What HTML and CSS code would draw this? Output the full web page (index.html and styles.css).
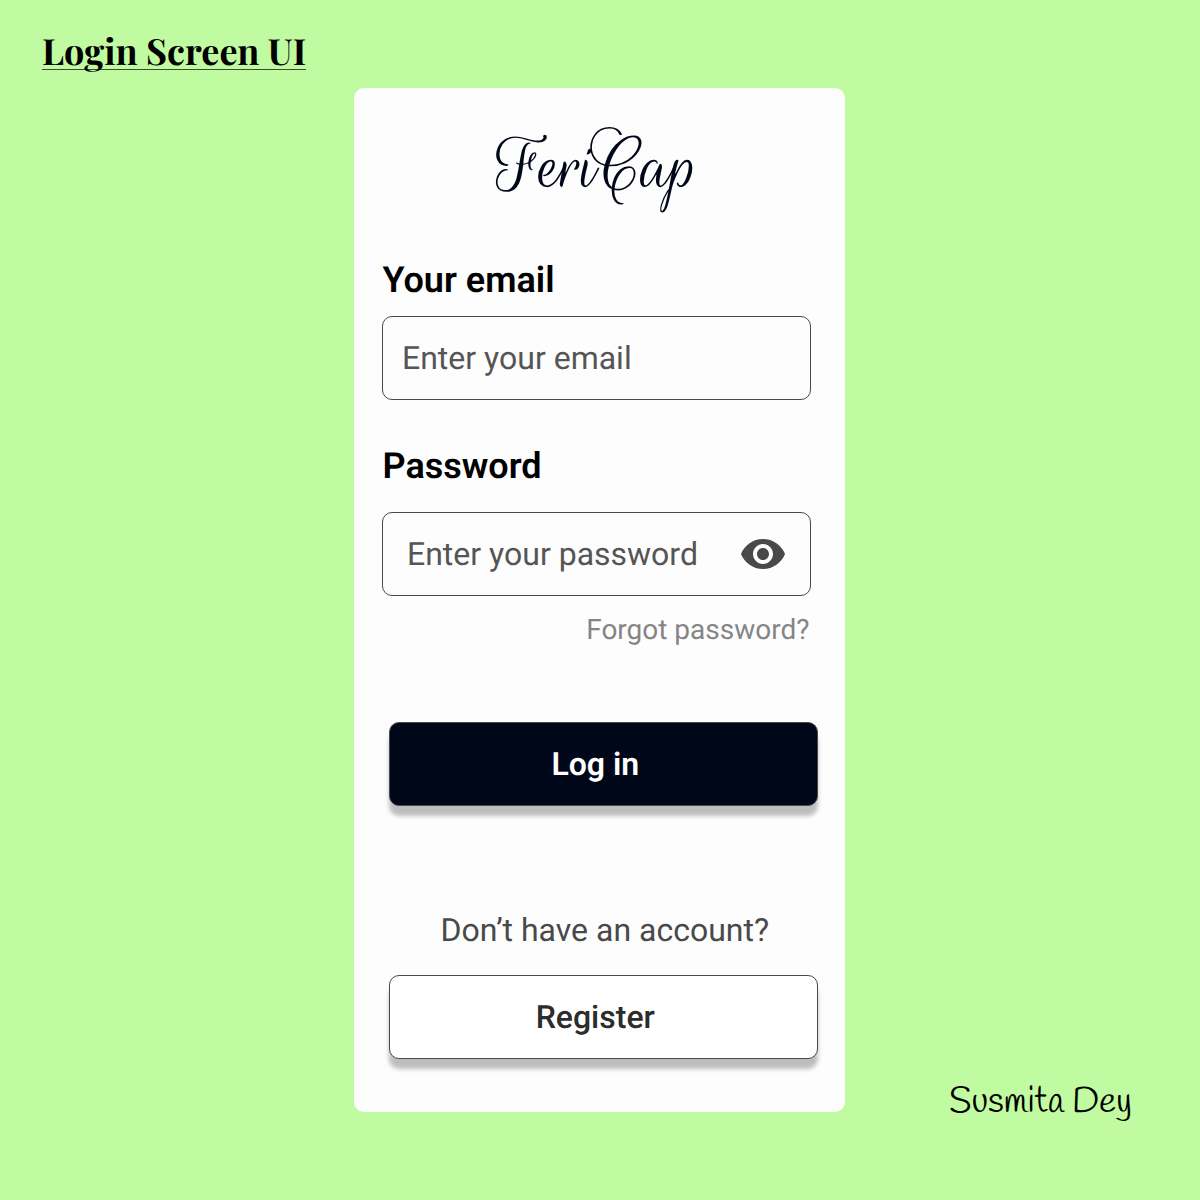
FILE: index.html
```html
<!DOCTYPE html>
<html lang="en">
<head>
<meta charset="utf-8">
<title>Login Screen UI</title>
<link rel="stylesheet" href="styles.css">
</head>
<body>
<div class="board">
  <h1 class="title">Login Screen UI</h1>
  <main class="card">
    <div class="logo">FeriCap</div>
    <form class="form">
      <label class="label" for="email">Your email</label>
      <div class="field"><input class="input" id="email" type="email" placeholder="Enter your email"></div>
      <label class="label label-password" for="password">Password</label>
      <div class="field field-password">
        <input class="input" id="password" type="password" placeholder="Enter your password">
        <svg class="eye" viewBox="1 4.5 22 15" aria-hidden="true"><path fill="#494949" d="M12 4.5C7 4.5 2.73 7.61 1 12c1.73 4.39 6 7.5 11 7.5s9.27-3.11 11-7.5c-1.73-4.39-6-7.5-11-7.5zM12 17c-2.76 0-5-2.24-5-5s2.24-5 5-5 5 2.24 5 5-2.24 5-5 5zm0-8c-1.66 0-3 1.34-3 3s1.34 3 3 3 3-1.34 3-3-1.34-3-3-3z"/></svg>
      </div>
      <a class="forgot">Forgot password?</a>
      <button class="button button-login" type="button">Log in</button>
      <p class="question">Don’t have an account?</p>
      <button class="button button-register" type="button">Register</button>
    </form>
  </main>
  <p class="author">Susmita Dey</p>
</div>
</body>
</html>
```
FILE: styles.css
```css
* { box-sizing: border-box; }
body { margin: 0; background: #c0faa1; font-family: Roboto, sans-serif; text-rendering: geometricPrecision; }
.board {
  width: 1200px;
  height: 1200px;
  display: grid;
  grid-template-columns: 354px 491px 355px;
  grid-template-rows: 88px 1024px 88px;
}
.title {
  grid-area: 1 / 1;
  justify-self: start;
  margin: 29px 0 0 42px;
  height: 41px;
  border-bottom: 1px solid #3a4c31;
  font: 700 36px/44px "Playfair Display", "Liberation Serif", serif;
  white-space: nowrap;
  color: #000;
}
.card {
  grid-area: 2 / 2;
  background: #fdfdfd;
  border-radius: 10px;
  padding: 37px 27px 0 28px;
}
.logo {
  height: 127px;
  padding-left: 113.5px;
  font: 400 80px/84px "Rouge Script", "Liberation Serif", cursive;
  white-space: nowrap;
  color: #000718;
}
.form { display: flex; flex-direction: column; }
.label { height: 64px; font-size: 36px; line-height: 56px; font-weight: 600; color: #000; padding-left: 0.5px; }
.label-password { height: 74px; margin-top: 38px; }
.field {
  display: flex;
  align-items: center;
  width: 429px;
  height: 84px;
  padding: 0 25.5px 0 19px;
  border: 1px solid #494949;
  border-radius: 10px;
}
.field-password { padding-left: 24px; }
.input {
  flex: 1;
  min-width: 0;
  padding: 0;
  border: 0;
  outline: 0;
  background: none;
  font: 400 32px/40px Roboto, sans-serif;
  text-rendering: geometricPrecision;
}
.input::placeholder { color: #555; opacity: 1; }
.eye { width: 44px; height: 30px; flex: none; }
.forgot { width: 427.5px; margin-top: 14px; font-size: 28px; line-height: 40px; text-align: right; color: #858585; }
.button {
  width: 429px;
  height: 84px;
  margin-left: 7px;
  padding: 0 16.5px 0 0;
  border: 1px solid #494949;
  border-radius: 10px;
  box-shadow: 0 10px 4px rgba(0, 0, 0, .25);
  font: 600 32px/40px Roboto, sans-serif;
  text-rendering: geometricPrecision;
}
.button-login { margin-top: 72px; background: #000718; color: #fff; }
.question { margin: 104px 0 0 58.5px; height: 65px; font-size: 32px; line-height: 40px; color: #494949; }
.button-register { background: #fff; color: #2c2c2c; font-weight: 500; }
.author {
  grid-area: 2 / 3 / 4 / 4;
  align-self: end;
  margin: 0 0 74px 104px;
  font: 400 36px/46px Handlee, Lato, sans-serif;
  color: #000;
  white-space: nowrap;
}
```
